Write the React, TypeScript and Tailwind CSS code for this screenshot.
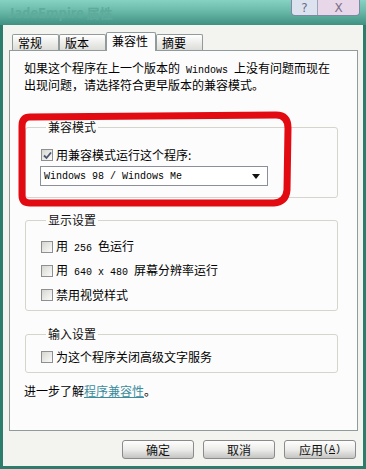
import React from "react";

const cjk = { fontFamily: '"Noto Sans CJK SC", "Liberation Sans", sans-serif' };
const mono = { fontFamily: '"Liberation Mono", "DejaVu Sans Mono", monospace' };

function M({ children }: { children: React.ReactNode }) {
  return (
    <span className="text-[10px] whitespace-pre" style={mono}>
      {children}
    </span>
  );
}

function Check({ checked = false }: { checked?: boolean }) {
  return (
    <span className="w-[12px] h-[12px] shrink-0 border border-[#8d8f90] bg-linear-to-br from-[#d6d6d0] to-[#fbfbfb] flex items-center justify-center">
      {checked && (
        <svg width="9" height="9" viewBox="0 0 9 9">
          <path d="M1 4.5 L3.5 7 L8 1.5" fill="none" stroke="#4b5670" strokeWidth="1.8" />
        </svg>
      )}
    </span>
  );
}

function Row({ checked, children }: { checked?: boolean; children: React.ReactNode }) {
  return (
    <div className="flex items-center h-[16px] gap-[3px] ml-[1px]">
      <Check checked={checked} />
      <span className="leading-[16px]">{children}</span>
    </div>
  );
}

function Group({ label, className, children }: { label: string; className: string; children: React.ReactNode }) {
  return (
    <fieldset className={`w-[313px] ml-[1px] border border-[#d5d5cc] rounded-[3px] pl-[14px] ${className}`}>
      <legend className="ml-[6px] px-[2px] leading-[14px] text-[#111]">{label}</legend>
      {children}
    </fieldset>
  );
}

function Tab({ w, active, children }: { w: string; active?: boolean; children: React.ReactNode }) {
  return active ? (
    <div className={`${w} h-[19px] -mb-[1px] z-10 bg-[#fcfcfc] border border-b-0 border-[#919b9c] rounded-t-[2px] pl-[5px] leading-[16px] text-[12px]`}>
      {children}
    </div>
  ) : (
    <div className={`${w} h-[16px] bg-linear-to-b from-[#ffffff] to-[#dcdcd8] border border-b-0 border-[#919b9c] rounded-t-[2px] pl-[5px] leading-[16px] text-[12px]`}>
      {children}
    </div>
  );
}

function Btn({ children }: { children: React.ReactNode }) {
  return (
    <button className="w-[72px] h-[19px] rounded-[3px] border border-[#8b8b8b] bg-linear-to-b from-[#fefefe] via-[#ececea] to-[#c4c4c2] text-[12px] leading-[16px] text-[#111] flex items-center justify-center">
      {children}
    </button>
  );
}

export default function App() {
  return (
    <div className="relative w-[366px] h-[469px] bg-[#2d7d6d] flex flex-col overflow-hidden text-[12px] text-black" style={cjk}>
      {/* title bar */}
      <div className="h-[25px] shrink-0 flex justify-between bg-linear-to-b from-[#86d2c3] via-[#66b6a6] to-[#3f9181]">
        <span className="pl-[7px] pt-[6px] font-bold text-[13px] leading-[14px] text-[#5eab9b]">JadeEmpire 属性</span>
        <div className="flex h-[16px] mr-[6px] border border-t-0 border-[#7d88a4] rounded-b-[4px] overflow-hidden">
          <span className="w-[26px] bg-[#dde3ee] border-r border-[#9aa3b8] flex items-center justify-center text-[12px] leading-[12px] text-[#6a6f8a]" style={{ fontFamily: '"DejaVu Sans", sans-serif' }}>?</span>
          <span className="w-[41px] bg-[#e8d7e9] flex items-center justify-center text-[12px] leading-[12px] text-[#7d6f8a]" style={{ fontFamily: '"DejaVu Sans", sans-serif' }}>X</span>
        </div>
      </div>

      {/* body */}
      <div className="flex-1 mx-[3px] mb-[3px] bg-[#f3f3ef] pl-[6px] pr-[5px] flex flex-col">
        <div className="flex items-end pl-[3px] pt-[7px] relative">
          <Tab w="w-[47px]">常规</Tab>
          <Tab w="w-[47px]">版本</Tab>
          <Tab w="w-[50px]" active>兼容性</Tab>
          <Tab w="w-[47px]">摘要</Tab>
        </div>

        <div className="h-[381px] border border-[#919b9c] bg-[#fcfcfc] pl-[14px] pt-[10px] flex flex-col">
          <p className="leading-[14px]">
            如果这个程序在上一个版本的<M> Windows </M>上没有问题而现在
            <br />
            出现问题，请选择符合更早版本的兼容模式。
          </p>

          <Group label="兼容模式" className="mt-[28px] pt-[13px] pb-[11px]">
            <Row checked>用兼容模式运行这个程序:</Row>
            <div className="mt-[3px] w-[228px] h-[20px] bg-white border border-[#8a8f99] flex items-center justify-between pl-[3px] pr-[7px]">
              <M>Windows 98 / Windows Me</M>
              <svg width="8" height="5" viewBox="0 0 8 5">
                <path d="M0 0 L8 0 L4 5 Z" fill="#111" />
              </svg>
            </div>
          </Group>

          <Group label="显示设置" className="mt-[15px] pt-[12px] pb-[7px]">
            <div className="flex flex-col gap-[8px]">
              <Row>
                用<M> 256 </M>色运行
              </Row>
              <Row>
                用<M> 640 x 480 </M>屏幕分辨率运行
              </Row>
              <Row>禁用视觉样式</Row>
            </div>
          </Group>

          <Group label="输入设置" className="mt-[16px] pt-[8px] pb-[7px]">
            <Row>为这个程序关闭高级文字服务</Row>
          </Group>

          <p className="mt-[10px] leading-[16px]">
            进一步了解<span className="text-[#3b8c9c] underline">程序兼容性</span>。
          </p>
        </div>

        <div className="flex justify-end gap-[9px] pr-[2px] mt-[9px]">
          <Btn>确定</Btn>
          <Btn>取消</Btn>
          <Btn>
            应用<M>(<span className="underline">A</span>)</M>
          </Btn>
        </div>
      </div>

      {/* red hand-drawn marking over the dialog */}
      <svg className="absolute left-0 top-0 pointer-events-none" width="366" height="469" viewBox="0 0 366 469">
        <path
          d="M30 117 L276 115 Q288 115 288 128 L287 190 Q286 202 274 203 L30 203 Q22 203 22 195 L22 126 Q22 117 30 117 Z"
          fill="none"
          stroke="#e30b12"
          strokeWidth="7"
          strokeLinejoin="round"
        />
      </svg>
    </div>
  );
}
